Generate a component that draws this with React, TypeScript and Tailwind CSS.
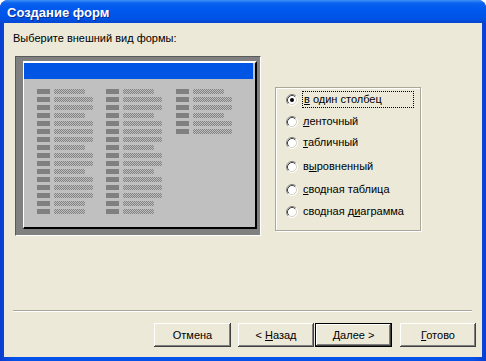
import React from "react";

const FONT = { fontFamily: '"Liberation Sans", Arial, sans-serif' };

const col12 = [false, true, true, false, true, true, true, false, true, true, false, true, true, true, false, false];
const col3 = [false, true, true, false, true, true];

function Col({ rows, w }: { rows: boolean[]; w: string }) {
  return (
    <div className={`flex flex-col gap-[3px] ${w}`}>
      {rows.map((long, i) => (
        <div key={i} className="flex h-[5px] gap-[4px]">
          <div className="h-[5px] w-[13px] bg-[#808080]" />
          <div
            className={
              long
                ? "h-[5px] w-[39px] [background-image:repeating-conic-gradient(#808080_0%_25%,#c0c0c0_0%_50%)] [background-size:2px_2px]"
                : "h-[5px] w-[31px] [background-image:repeating-conic-gradient(#808080_0%_25%,#c0c0c0_0%_50%)] [background-size:2px_2px]"
            }
          />
        </div>
      ))}
    </div>
  );
}

function Radio({ checked }: { checked?: boolean }) {
  return (
    <svg width="12" height="12" viewBox="0 0 12 12" className="shrink-0">
      <circle cx="6" cy="6" r="5" fill="#fff" />
      <path d="M2.11 9.89 A5.5 5.5 0 0 1 9.89 2.11" fill="none" stroke="#808080" strokeWidth="1" />
      <path d="M2.82 9.18 A4.5 4.5 0 0 1 9.18 2.82" fill="none" stroke="#404040" strokeWidth="1" />
      <path d="M9.89 2.11 A5.5 5.5 0 0 1 2.11 9.89" fill="none" stroke="#ffffff" strokeWidth="1" />
      <path d="M9.18 2.82 A4.5 4.5 0 0 1 2.82 9.18" fill="none" stroke="#d4d0c8" strokeWidth="1" />
      {checked && <circle cx="6" cy="6" r="2" fill="#000" />}
    </svg>
  );
}

const radios: { pre: string; u: string; post: string; cls: string; checked?: boolean; focus?: boolean }[] = [
  { pre: "", u: "в", post: " один столбец", cls: "mt-[3px]", checked: true, focus: true },
  { pre: "", u: "л", post: "енточный", cls: "mt-[5px]" },
  { pre: "", u: "т", post: "абличный", cls: "mt-[4px]" },
  { pre: "в", u: "ы", post: "ровненный", cls: "mt-[7px]" },
  { pre: "", u: "с", post: "водная таблица", cls: "mt-[6px]" },
  { pre: "сводная д", u: "и", post: "аграмма", cls: "mt-[5px]" },
];

function Btn({ children, def, w }: { children: React.ReactNode; def?: boolean; w: string }) {
  return (
    <div
      className={
        def
          ? `${w} h-[24px] flex items-center justify-center border border-black shadow-[inset_-1px_-1px_#404040,inset_1px_1px_#fff,inset_-2px_-2px_#808080] text-[11px] text-black`
          : `${w} h-[24px] flex items-center justify-center shadow-[inset_-1px_-1px_#404040,inset_1px_1px_#fff,inset_-2px_-2px_#808080] text-[11px] text-black`
      }
    >
      {children}
    </div>
  );
}

export default function App() {
  return (
    <div className="w-[486px] h-[361px] bg-white" style={FONT}>
      <div className="w-[486px] h-[361px] flex flex-col rounded-t-[8px] overflow-hidden bg-[linear-gradient(to_right,#0a3fd0,#0552e8_3%,#0552e8_97%,#0a3fd0)]">
        <div className="h-[23px] shrink-0 flex items-center pl-[7px] pt-[1px] bg-[linear-gradient(to_bottom,#3d8ff7_0%,#0a62f0_14%,#0058ee_40%,#0053e6_80%,#0546d0_100%)]">
          <span className="text-white font-bold text-[13px] leading-none [text-shadow:1px_1px_0_#0a2a8c]">Создание форм</span>
        </div>
        <div className="flex-1 mx-[4px] mb-[4px] bg-[#ECE9D8] flex flex-col">
          <div className="pl-[9px] pt-[9px] text-[11px] leading-[13px] text-black">Выберите внешний вид формы:</div>
          <div className="flex items-start mt-[11px] ml-[11px]">
            <div className="w-[246px] h-[180px] bg-[#808080] border-t border-l border-t-[#5a5a5a] border-l-[#5a5a5a] border-b border-r border-b-white border-r-white pl-[7px] pt-[4px]">
              <div className="w-[234px] h-[168px] bg-[#c0c0c0] border-l border-t-2 border-l-white border-t-white border-r-2 border-b-2 border-r-black border-b-black flex flex-col">
                <div className="h-[16px] mr-[2px] bg-[#0055e5]" />
                <div className="flex mt-[10px] pl-[13px]">
                  <Col rows={col12} w="w-[69px]" />
                  <Col rows={col12} w="w-[70px]" />
                  <Col rows={col3} w="w-[70px]" />
                </div>
              </div>
            </div>
            <div className="ml-[14px] mt-[31px] w-[146px] h-[144px] border border-[#aca899] shadow-[inset_1px_1px_0_#fff,1px_1px_0_#fff] pl-[10px] flex flex-col">
              {radios.map((r, i) => (
                <div key={i} className={`flex items-center h-[17px] ${r.cls}`}>
                  <Radio checked={r.checked} />
                  <div
                    className={
                      r.focus
                        ? "ml-[4px] w-[112px] h-[17px] flex items-center px-[1px] border border-dotted border-black text-[11px] text-black"
                        : "ml-[5px] h-[17px] flex items-center text-[11px] text-black"
                    }
                  >
                    <span>
                      {r.pre}
                      <span className="underline underline-offset-[1px]">{r.u}</span>
                      {r.post}
                    </span>
                  </div>
                </div>
              ))}
            </div>
          </div>
          <div className="mt-auto ml-[9px] mr-[10px] h-[2px] border-t border-t-[#aca899] border-b border-b-white" />
          <div className="flex justify-end mt-[11px] mb-[10px] mr-[6px]">
            <Btn w="w-[77px]">Отмена</Btn>
            <div className="w-[7px]" />
            <Btn w="w-[76px]">
              <span>
                &lt; <span className="underline">Н</span>азад
              </span>
            </Btn>
            <div className="w-[1px]" />
            <Btn w="w-[77px]" def>
              <span>
                <span className="underline">Д</span>алее &gt;
              </span>
            </Btn>
            <div className="w-[8px]" />
            <Btn w="w-[76px]">
              <span>
                <span className="underline">Г</span>отово
              </span>
            </Btn>
          </div>
        </div>
      </div>
    </div>
  );
}
